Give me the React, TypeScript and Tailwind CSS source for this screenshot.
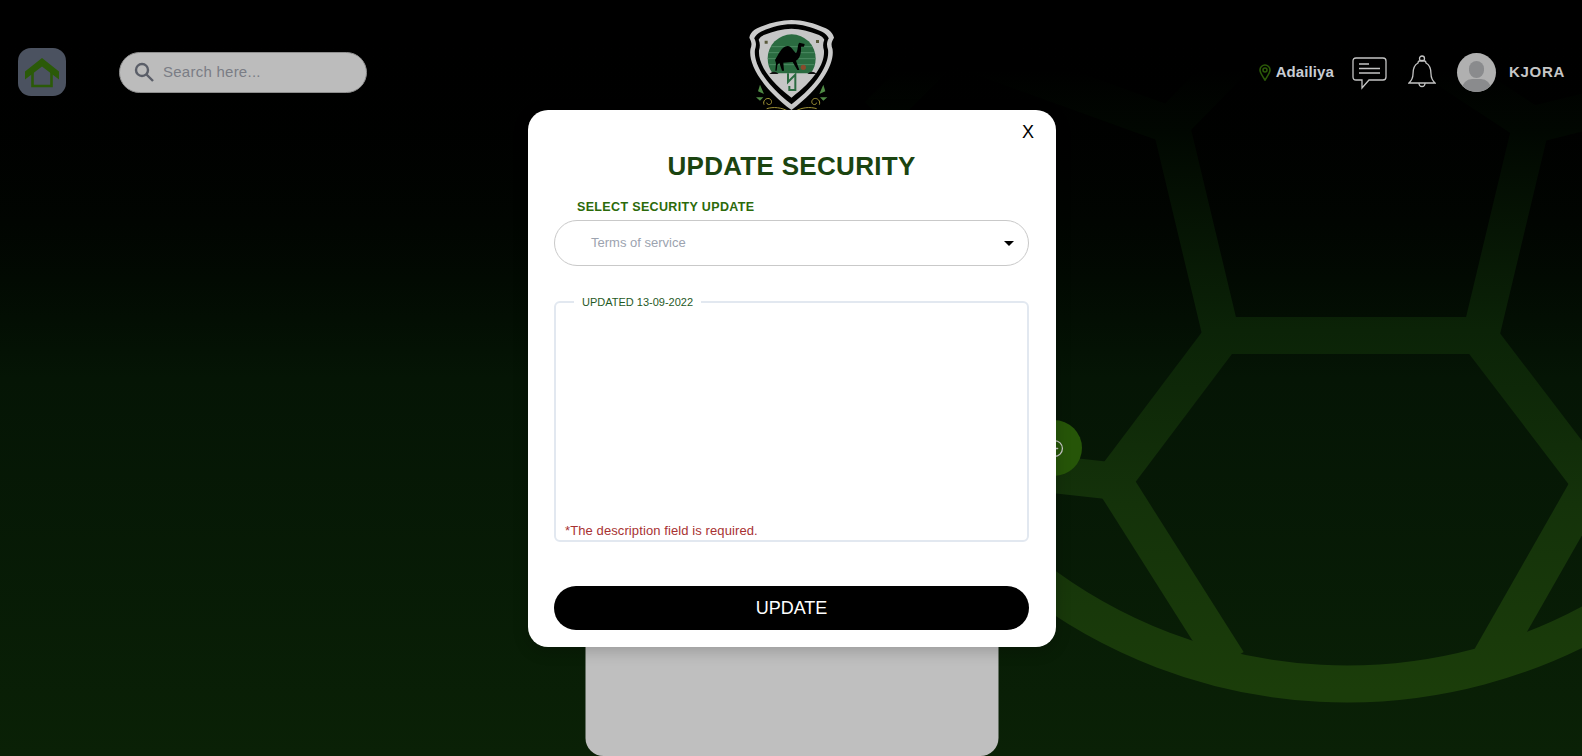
import { CirclePlus } from "lucide-react";

const sans = "font-['Liberation_Sans',Arial,sans-serif]";

function FootballLines() {
  return (
    <svg className="absolute inset-0" width="1582" height="756" viewBox="0 0 1582 756" fill="none">
      <defs>
        <linearGradient id="ballStroke" gradientUnits="userSpaceOnUse" x1="0" y1="70" x2="0" y2="690">
          <stop offset="0" stopColor="#000000" />
          <stop offset="0.1" stopColor="#010701" />
          <stop offset="0.42" stopColor="#0b2307" />
          <stop offset="0.7" stopColor="#14320a" />
          <stop offset="1" stopColor="#1b3d0a" />
        </linearGradient>
      </defs>
      <g stroke="url(#ballStroke)" strokeWidth="37" strokeLinejoin="bevel">
        <path d="M1171 125 L1220 330 M1531 125 L1482 330" />
        <path d="M1212 335.5 H1490" />
        <path d="M1223 335 L1113 481" />
        <path d="M1478 335 L1620 521" />
        <path d="M1122 482 L1040 473" />
        <path d="M1114 482 L1228 662" />
        <path d="M1484 670 L1620 431" />
        <path d="M1030 574.9 A515 515 0 0 0 1620 605.7" />
        <path d="M878 115 L948 45 L1170 125 L1248 45" />
        <path d="M1410 45 L1532 125 L1600 108" />
      </g>
    </svg>
  );
}

function ClubLogo() {
  return (
    <svg width="140" height="110" viewBox="0 0 420 330" fill="none">
      <g transform="translate(57.8 13) scale(1.119 1)">
        <path
          d="M27 70 C30 55 38 48 48 42 C80 26 110 17 140 17 C170 17 200 26 232 42 C242 48 250 55 254 70 C246 84 246 92 250 104 C256 145 225 215 140 287 C55 215 24 145 30 104 C34 92 34 84 27 70Z"
          fill="#cbcbcb"
        />
        <path
          d="M40 72 C44 62 50 57 58 52 C88 38 112 30 140 30 C168 30 192 38 222 52 C230 57 236 62 240 72 C234 84 234 94 238 106 C242 145 215 205 140 270 C65 205 38 145 42 106 C46 94 46 84 40 72Z"
          fill="#000"
        />
        <path
          d="M52 76 C56 68 60 66 66 62 C92 50 116 43 140 43 C164 43 188 50 214 62 C220 66 224 68 228 76 C224 86 224 96 227 108 C230 145 205 195 140 250 C75 195 50 145 53 108 C56 96 56 86 52 76Z"
          fill="#c6c6c6"
        />
      </g>
      <path d="M143 145 A72 72 0 0 1 287 145 C287 162 282 178 272 190 H158 C148 178 143 162 143 145Z" fill="#2a6b40" />
      <path d="M154 110 H276 M146 128 H284 M144 146 H286 M148 164 H282" stroke="#5d9a73" strokeWidth="2" />
      <path
        d="M165 150 C175 135 185 108 203 108 C215 108 222 128 228 128 C234 126 232 102 238 98 L254 102 L252 110 L243 110 C244 128 240 145 228 152 L238 180 L232 180 L218 156 L190 158 L192 182 L186 182 L178 158 L172 165 L170 182 L166 182 L168 160Z"
        fill="#000"
      />
      <circle cx="250" cy="172" r="8" fill="#8a4b2c" />
      <path d="M148 192 Q162 178 176 192Z M262 192 Q276 178 290 192Z" fill="#111" />
      <path d="M204 190 V216 L226 194 V240 H208 V228" stroke="#2a6b40" strokeWidth="6" />
      <path d="M134 92 h9 v9 h-9Z M288 90 h9 v9 h-9Z" fill="#59593a" />
      <g fill="#4f8a45">
        <path d="M120 224 L132 252 L114 244Z M108 262 L130 262 L120 272Z M310 224 L298 252 L316 244Z M322 262 L300 262 L310 272Z" />
      </g>
      <g stroke="#a89a3a" strokeWidth="3">
        <path d="M132 284 C126 268 148 258 154 272 C158 284 142 288 140 278 M140 296 C160 290 185 292 205 304" />
        <path d="M298 284 C304 268 282 258 276 272 C272 284 288 288 290 278 M290 296 C270 290 245 292 225 304" />
      </g>
    </svg>
  );
}

function HomeTile() {
  return (
    <div className="w-12 h-12 rounded-[13px] bg-[#4b5260] flex items-center justify-center">
      <svg width="36" height="32" viewBox="0 0 36 32" fill="none">
        <path d="M18 2 L35 15.5 V23.5 L18 10.5 L1 23.5 V15.5Z" fill="#2b5a08" />
        <path d="M8.5 16 V30 H27.5 V16" stroke="#2b5a08" strokeWidth="2.6" />
      </svg>
    </div>
  );
}

export default function App() {
  return (
    <div className={`relative w-[1582px] h-[756px] overflow-hidden bg-linear-to-b from-black via-[#051505] via-50% to-[#0a2106] ${sans}`}>
      <FootballLines />

      {/* Page behind the modal */}
      <div className="relative flex flex-col h-full">
        <header className="flex items-center h-12 mt-12 pl-[18px] pr-[17px] shrink-0">
          <HomeTile />
          <div className="ml-[53px] w-[248px] h-[41px] rounded-full bg-[#bcbcbc] border border-[#8e8e8e] flex items-center pl-[14px] gap-[9px]">
            <svg width="20" height="20" viewBox="0 0 20 20" fill="none" stroke="#5a5e68" strokeWidth="2.4">
              <circle cx="8" cy="8" r="6" />
              <path d="M12.5 12.5 L19 19" />
            </svg>
            <span className="pt-[1px] text-[15px] tracking-[0.25px] text-[#7a7d85]">Search here...</span>
          </div>

          <div className="ml-auto flex items-center h-[39px]">
            <svg width="12" height="17" viewBox="0 0 12 17" fill="none" stroke="#2b5a08" strokeWidth="1.6">
              <path d="M6 16 C3 11 1 9 1 6 A5 5 0 0 1 11 6 C11 9 9 11 6 16Z" />
              <circle cx="6" cy="6" r="2" />
            </svg>
            <span className="ml-[5px] text-[15px] font-bold tracking-[0.1px] text-[#c9cdd4]">Adailiya</span>
            <svg className="ml-[18px] mt-[2px]" width="35" height="33" viewBox="0 0 35 33" fill="none" stroke="#c4c4c4" strokeWidth="1.3">
              <path d="M4 1 H31 Q34 1 34 4 V20 Q34 23 31 23 H17 L10 31 V23 H4 Q1 23 1 20 V4 Q1 1 4 1Z" />
              <path d="M7 7 H17 M7 11.5 H28 M7 16 H28" />
            </svg>
            <svg className="ml-[21px]" width="28" height="34" viewBox="0 0 28 34" fill="none" stroke="#c4c4c4" strokeWidth="1.3">
              <circle cx="14" cy="3.5" r="2.5" />
              <path d="M10 8 C10 6 12 5.5 14 5.5 C16 5.5 18 6 18 8 C22 10 23 14 23 19 C23 23 25 26 27 28 H1 C3 26 5 23 5 19 C5 14 6 10 10 8Z" />
              <path d="M11 28 A3 3.5 0 0 0 17 28" />
            </svg>
            <div className="ml-[21px] w-[39px] h-[39px] rounded-full bg-[#b0b0b0] overflow-hidden relative">
              <div className="absolute left-[12px] top-[8px] w-[15px] h-[17px] rounded-full bg-[#8a8b8d]" />
              <div className="absolute left-[5px] top-[26px] w-[29px] h-[20px] rounded-full bg-[#8a8b8d]" />
            </div>
            <span className="ml-[13px] text-[15px] font-bold tracking-[0.7px] text-[#c6c6c6]">KJORA</span>
          </div>
        </header>

        <div className="absolute left-[720px] top-[10px]">
          <ClubLogo />
        </div>

        <main className="flex-1 mt-[100px] mx-auto w-[413px] translate-x-[0.5px] rounded-[18px] bg-[#bfbfbf]" />

        {/* Floating green button, half under the modal */}
        <div className="absolute left-[1026px] top-[420px] w-14 h-14 rounded-full bg-[#265508] flex items-center justify-center">
          <CirclePlus size={19} strokeWidth={1.6} color="#c8c8c8" />
        </div>
      </div>

      {/* Modal */}
      <div className="absolute left-[528px] top-[110px] w-[528px] h-[537px] rounded-[20px] bg-white shadow-[0_4px_16px_rgba(0,0,0,0.2)] pl-[26px] pr-[27px] flex flex-col">
        <button className="absolute right-[22px] top-[13px] text-[18px] leading-[18px] text-black">X</button>
        <h2 className="mt-[40px] text-center text-[26px] leading-[32px] font-bold tracking-[0.3px] text-[#1b4410]">
          UPDATE SECURITY
        </h2>
        <label className="mt-[16px] ml-[23px] text-[12.5px] leading-[18px] font-bold tracking-[0.35px] text-[#2b6a0a]">
          SELECT SECURITY UPDATE
        </label>
        <div className="mt-[4px] h-[46px] rounded-full border border-[#c9c9c9] flex items-center pl-[36px] pr-[14px]">
          <span className="text-[13px] text-[#9ca3af] flex-1">Terms of service</span>
          <span className="w-0 h-0 border-x-[5px] border-x-transparent border-t-[5px] border-t-black" />
        </div>
        <fieldset className="mt-[30px] h-[246px] rounded-md border-2 border-[#e2e8f0] px-[9px]">
          <legend className="ml-[9px] px-2 text-[11px] leading-[12px] text-[#1f5a1f]">UPDATED 13-09-2022</legend>
          <p className="mt-[215px] text-[13px] leading-[16px] tracking-[0.1px] text-[#a83232]">*The description field is required.</p>
        </fieldset>
        <button className="mt-[44px] h-[44px] rounded-full bg-black text-white text-lg">UPDATE</button>
      </div>
    </div>
  );
}
